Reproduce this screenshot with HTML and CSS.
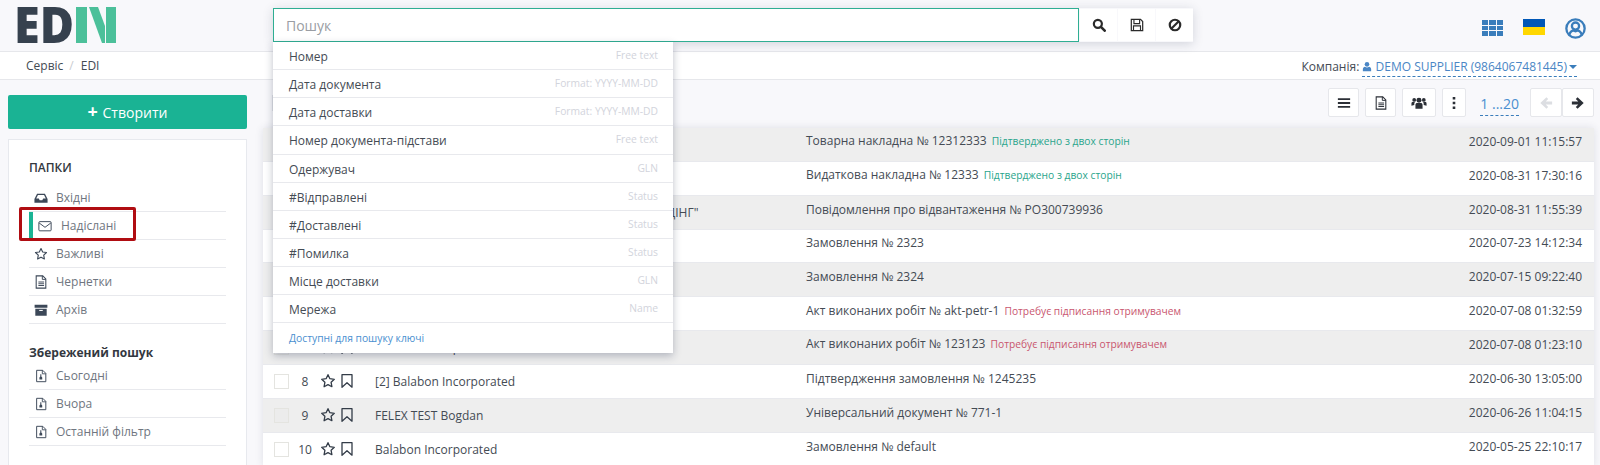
FILE: index.html
```html
<!DOCTYPE html>
<html lang="uk">
<head>
    <meta charset="UTF-8">
    <meta name="viewport" content="width=device-width, initial-scale=1.0">
    <title>EDIN</title>
    <link rel="stylesheet" href="styles.css">
</head>
<body>
    <svg class="icon-sprite" aria-hidden="true">
        <symbol id="i-search" viewBox="0 0 16 16"><circle cx="6.7" cy="6.7" r="4.6" fill="none" stroke="currentColor" stroke-width="2.5"/><path d="M10.2 10.2l4.3 4.3" stroke="currentColor" stroke-width="3" stroke-linecap="round"/></symbol>
        <symbol id="i-save" viewBox="0 0 16 16"><path d="M1.500 1.500h10.500l2.500 2.500v10.500h-13z" fill="none" stroke="currentColor" stroke-width="1.400"/><path d="M4.500 2v4.500h6.500v-4.500M4 14v-5h8v5" fill="none" stroke="currentColor" stroke-width="1.300"/></symbol>
        <symbol id="i-ban" viewBox="0 0 16 16"><circle cx="8" cy="8" r="6" fill="none" stroke="currentColor" stroke-width="2.500"/><path d="M4 12l8-8" stroke="currentColor" stroke-width="2.500"/></symbol>
        <symbol id="i-bars" viewBox="0 0 16 16"><path d="M1 2.500h14v2.200h-14zM1 6.900h14v2.200h-14zM1 11.300h14v2.200h-14z" fill="currentColor"/></symbol>
        <symbol id="i-doc" viewBox="0 0 16 16"><path d="M2.500 1h7.500l3.500 3.500v10.500h-11z" fill="none" stroke="currentColor" stroke-width="1.200"/><path d="M9.500 1v4h4M5 8h6.500M5 10h6.500M5 12h6.500" fill="none" stroke="currentColor" stroke-width="1.100"/></symbol>
        <symbol id="i-users" viewBox="0 0 18 16"><circle cx="9" cy="5" r="2.800" fill="currentColor"/><circle cx="3.600" cy="4.500" r="2.100" fill="currentColor"/><circle cx="14.400" cy="4.500" r="2.100" fill="currentColor"/><path d="M5 14.500v-4.300c0-1.500 1-2.200 2-2.200h4c1 0 2 .7 2 2.200v4.300zM.500 11v-2.500c0-1 .7-1.500 1.500-1.500h2.500c-.6.800-.8 1.500-.8 3.200zM17.500 11v-2.500c0-1-.7-1.500-1.500-1.500h-2.500c.6.800.8 1.500.8 3.200z" fill="currentColor"/></symbol>
        <symbol id="i-dots" viewBox="0 0 16 16"><path d="M6.700 2h2.600v2.600h-2.600zM6.700 6.700h2.600v2.600h-2.600zM6.700 11.400h2.600v2.600h-2.600z" fill="currentColor"/></symbol>
        <symbol id="i-left" viewBox="0 0 16 16"><path d="M8.500 1.500l-7 6.500 7 6.500 2-2-2.800-2.800h7.300v-3.400h-7.300l2.800-2.800z" fill="currentColor"/></symbol>
        <symbol id="i-right" viewBox="0 0 16 16"><path d="M7.500 1.500l7 6.500-7 6.500-2-2 2.800-2.800h-7.300v-3.400h7.300l-2.800-2.800z" fill="currentColor"/></symbol>
        <symbol id="i-inbox" viewBox="0 0 16 16"><path d="M3.500 3h9l3 6v4.500h-15v-4.500zM4.500 4.500l-2 4h3l1 2h3l1-2h3l-2-4z" fill="currentColor" fill-rule="evenodd"/></symbol>
        <symbol id="i-mail" viewBox="0 0 16 16"><rect x="1" y="3" width="14" height="10.500" rx="1" fill="none" stroke="currentColor" stroke-width="1.100"/><path d="M1.300 4.500l6.700 5 6.700-5" fill="none" stroke="currentColor" stroke-width="1.100"/></symbol>
        <symbol id="i-star" viewBox="0 0 16 16"><path d="M8 1.700l1.900 4 4.400.6-3.200 3 .8 4.400-3.900-2.100-3.900 2.100.8-4.400-3.200-3 4.400-.6z" fill="none" stroke="currentColor" stroke-width="1.300" stroke-linejoin="round"/></symbol>
        <symbol id="i-mark" viewBox="0 0 12 14"><path d="M1 .7h10v12.500l-5-4.400-5 4.400z" fill="none" stroke="currentColor" stroke-width="1.300" stroke-linejoin="round"/></symbol>
        <symbol id="i-archive" viewBox="0 0 16 16"><path d="M.7 2h14.600v3.500h-14.600zM1.500 6.500h13v8h-13z" fill="currentColor"/><path d="M6 8.500h4" stroke="#fff" stroke-width="1.200"/></symbol>
        <symbol id="i-file" viewBox="0 0 16 16"><path d="M3 1.500h7l3.500 3.500v9.500h-10.500z" fill="none" stroke="currentColor" stroke-width="1.100"/><path d="M9.500 1.500v4h4" fill="none" stroke="currentColor"/><path d="M7.200 6h1.200v2.500l1 1.200v2.300h-3.200v-2.300l1-1.200z" fill="currentColor"/></symbol>
        <symbol id="i-person" viewBox="0 0 14 14"><circle cx="7" cy="4" r="3.200" fill="currentColor"/><path d="M1.200 13.500v-2.500c0-2.200 1.500-3.500 3-3.500 1.600 1.200 4 1.200 5.600 0 1.500 0 3 1.300 3 3.500v2.500z" fill="currentColor"/></symbol>
        <symbol id="i-account" viewBox="0 0 22 22"><circle cx="11" cy="11" r="9.600" fill="none" stroke="currentColor" stroke-width="2.400"/><circle cx="11" cy="8.500" r="3.800" fill="none" stroke="currentColor" stroke-width="2.400"/><path d="M4.500 18c.5-3.500 3-4.800 4-4.800 1.500.8 3.500.8 5 0 1 0 3.500 1.300 4 4.800" fill="none" stroke="currentColor" stroke-width="2.400"/></symbol>
    </svg>

    <header class="topbar">
        <a class="logo" href="#">
            <svg class="logo-mark" width="98" height="36" viewBox="0 0 98 36">
                <text class="logo-text" x="-4" y="36" textLength="60" lengthAdjust="spacingAndGlyphs">ED</text>
                <rect x="58" y="0" width="11" height="36" fill="#4cc09a"/>
                <polygon points="71,0 80,0 87,19 87,36 84,36" fill="#4cc09a"/>
                <rect x="88" y="0" width="10" height="36" fill="#4cc09a"/>
            </svg>
        </a>
        <div class="search">
            <div class="search-field">
                <input class="search-input" type="text" placeholder="Пошук">
                <div class="search-drop">
                    <div class="drop-row"><span>Номер</span><small>Free text</small></div>
                    <div class="drop-row"><span>Дата документа</span><small>Format: YYYY-MM-DD</small></div>
                    <div class="drop-row"><span>Дата доставки</span><small>Format: YYYY-MM-DD</small></div>
                    <div class="drop-row"><span>Номер документа-підстави</span><small>Free text</small></div>
                    <div class="drop-row"><span>Одержувач</span><small>GLN</small></div>
                    <div class="drop-row"><span>#Відправлені</span><small>Status</small></div>
                    <div class="drop-row"><span>#Доставлені</span><small>Status</small></div>
                    <div class="drop-row"><span>#Помилка</span><small>Status</small></div>
                    <div class="drop-row"><span>Місце доставки</span><small>GLN</small></div>
                    <div class="drop-row"><span>Мережа</span><small>Name</small></div>
                    <a class="drop-foot" href="#">Доступні для пошуку ключі</a>
                </div>
            </div>
            <button class="search-btn"><svg class="ic14"><use href="#i-search"/></svg></button>
            <button class="search-btn"><svg class="ic14"><use href="#i-save"/></svg></button>
            <button class="search-btn"><svg class="ic14"><use href="#i-ban"/></svg></button>
        </div>
        <div class="top-icons">
            <div class="apps">
                <i></i><i></i><i></i><i></i><i></i><i></i><i></i><i></i><i></i>
            </div>
            <div class="flag"></div>
            <svg class="account"><use href="#i-account"/></svg>
        </div>
    </header>

    <div class="crumbs">
        <div class="crumb-list">
            <span>Сервіс</span><span class="crumb-sep">/</span><span>EDI</span>
        </div>
        <div class="company">
            Компанія:
            <a class="company-link" href="#"><svg class="ic10"><use href="#i-person"/></svg> DEMO SUPPLIER (9864067481445)<span class="caret"></span></a>
        </div>
    </div>

    <div class="main">
        <aside class="side">
            <button class="create-btn"><span class="plus">+</span> Створити</button>
            <div class="panel">
                <h4 class="panel-title">ПАПКИ</h4>
                <ul class="folder-list">
                    <li><svg class="ic14"><use href="#i-inbox"/></svg>Вхідні</li>
                    <li class="active"><svg class="ic14"><use href="#i-mail"/></svg>Надіслані<div class="mark-box"></div></li>
                    <li><svg class="ic14"><use href="#i-star"/></svg>Важливі</li>
                    <li><svg class="ic14"><use href="#i-doc"/></svg>Чернетки</li>
                    <li><svg class="ic14"><use href="#i-archive"/></svg>Архів</li>
                </ul>
                <h4 class="panel-title saved">Збережений пошук</h4>
                <ul class="folder-list">
                    <li><svg class="ic14"><use href="#i-file"/></svg>Сьогодні</li>
                    <li><svg class="ic14"><use href="#i-file"/></svg>Вчора</li>
                    <li><svg class="ic14"><use href="#i-file"/></svg>Останній фільтр</li>
                </ul>
            </div>
        </aside>

        <section class="content">
            <div class="toolbar">
                <div class="tool-edge"></div>
                <button class="tool-btn w31"><svg class="ic14"><use href="#i-bars"/></svg></button>
                <button class="tool-btn w31"><svg class="ic14"><use href="#i-doc"/></svg></button>
                <button class="tool-btn w34"><svg class="ic16"><use href="#i-users"/></svg></button>
                <button class="tool-btn w24"><svg class="ic16"><use href="#i-dots"/></svg></button>
                <a class="pager" href="#">1 ...20</a>
                <div class="arrows">
                    <button class="tool-btn w32 off"><svg class="ic14"><use href="#i-left"/></svg></button>
                    <button class="tool-btn w32"><svg class="ic14"><use href="#i-right"/></svg></button>
                </div>
            </div>

            <div class="doc-table">
                <div class="doc-row">
                    <span class="check"></span><span class="num">1</span>
                    <svg class="star"><use href="#i-star"/></svg><svg class="mark"><use href="#i-mark"/></svg>
                    <span class="name">Balabon Incorporated</span>
                    <span class="subject">Товарна накладна № 12312333 <em class="ok">Підтверджено з двох сторін</em></span>
                    <span class="date">2020-09-01 11:15:57</span>
                </div>
                <div class="doc-row">
                    <span class="check"></span><span class="num">2</span>
                    <svg class="star"><use href="#i-star"/></svg><svg class="mark"><use href="#i-mark"/></svg>
                    <span class="name">Balabon Incorporated</span>
                    <span class="subject">Видаткова накладна № 12333 <em class="ok">Підтверджено з двох сторін</em></span>
                    <span class="date">2020-08-31 17:30:16</span>
                </div>
                <div class="doc-row">
                    <span class="check"></span><span class="num">3</span>
                    <svg class="star"><use href="#i-star"/></svg><svg class="mark"><use href="#i-mark"/></svg>
                    <span class="name">ТОВ З ОБМЕЖЕНОЮ ВІДПОВІДАЛЬНІСТЮ "АВ ХОЛДІНГ"</span>
                    <span class="subject">Повідомлення про відвантаження № PO300739936</span>
                    <span class="date">2020-08-31 11:55:39</span>
                </div>
                <div class="doc-row">
                    <span class="check"></span><span class="num">4</span>
                    <svg class="star"><use href="#i-star"/></svg><svg class="mark"><use href="#i-mark"/></svg>
                    <span class="name">Balabon Incorporated</span>
                    <span class="subject">Замовлення № 2323</span>
                    <span class="date">2020-07-23 14:12:34</span>
                </div>
                <div class="doc-row">
                    <span class="check"></span><span class="num">5</span>
                    <svg class="star"><use href="#i-star"/></svg><svg class="mark"><use href="#i-mark"/></svg>
                    <span class="name">Balabon Incorporated</span>
                    <span class="subject">Замовлення № 2324</span>
                    <span class="date">2020-07-15 09:22:40</span>
                </div>
                <div class="doc-row">
                    <span class="check"></span><span class="num">6</span>
                    <svg class="star"><use href="#i-star"/></svg><svg class="mark"><use href="#i-mark"/></svg>
                    <span class="name">Balabon Incorporated</span>
                    <span class="subject">Акт виконаних робіт № akt-petr-1 <em class="warn">Потребує підписання отримувачем</em></span>
                    <span class="date">2020-07-08 01:32:59</span>
                </div>
                <div class="doc-row">
                    <span class="check"></span><span class="num">7</span>
                    <svg class="star"><use href="#i-star"/></svg><svg class="mark"><use href="#i-mark"/></svg>
                    <span class="name">Balabon Incorporated</span>
                    <span class="subject">Акт виконаних робіт № 123123 <em class="warn">Потребує підписання отримувачем</em></span>
                    <span class="date">2020-07-08 01:23:10</span>
                </div>
                <div class="doc-row">
                    <span class="check"></span><span class="num">8</span>
                    <svg class="star"><use href="#i-star"/></svg><svg class="mark"><use href="#i-mark"/></svg>
                    <span class="name">[2] Balabon Incorporated</span>
                    <span class="subject">Підтвердження замовлення № 1245235</span>
                    <span class="date">2020-06-30 13:05:00</span>
                </div>
                <div class="doc-row">
                    <span class="check"></span><span class="num">9</span>
                    <svg class="star"><use href="#i-star"/></svg><svg class="mark"><use href="#i-mark"/></svg>
                    <span class="name">FELEX TEST Bogdan</span>
                    <span class="subject">Універсальний документ № 771-1</span>
                    <span class="date">2020-06-26 11:04:15</span>
                </div>
                <div class="doc-row">
                    <span class="check"></span><span class="num">10</span>
                    <svg class="star"><use href="#i-star"/></svg><svg class="mark"><use href="#i-mark"/></svg>
                    <span class="name">Balabon Incorporated</span>
                    <span class="subject">Замовлення № default</span>
                    <span class="date">2020-05-25 22:10:17</span>
                </div>
            </div>
        </section>
    </div>
</body>
</html>
```

FILE: styles.css
```css
* {
    box-sizing: border-box;
}

html, body {
    height: 465px;
    overflow: hidden;
}

body {
    margin: 0;
    font-family: "Open Sans", sans-serif;
    font-size: 12px;
    line-height: 17px;
    background-color: #f8f8fb;
    color: #444b54;
}

a {
    text-decoration: none;
}

button {
    font-family: inherit;
    cursor: pointer;
}

.icon-sprite {
    display: none;
}

.ic10 { width: 10px; height: 11px; }
.ic14 { width: 14px; height: 14px; }
.ic16 { width: 16px; height: 16px; }

/* top bar */
.topbar {
    display: flex;
    align-items: flex-start;
    height: 52px;
    padding: 8px 14px 0 18px;
    border-bottom: 1px solid #e6e7eb;
}

.logo {
    display: block;
    width: 255px;
    height: 36px;
    margin-top: -1px;
}

.logo-mark {
    overflow: visible;
}

.logo-text {
    font-family: "Open Sans", sans-serif;
    font-weight: 800;
    font-size: 50px;
    fill: #36414e;
}

.search {
    display: flex;
    box-shadow: 0 2px 10px rgba(40, 50, 80, 0.18);
    height: 34px;
}

.search-field {
    position: relative;
    width: 806px;
}

.search-input {
    display: block;
    width: 100%;
    height: 34px;
    padding: 0 12px;
    border: 1px solid #2fae93;
    background: #fff;
    font-family: inherit;
    font-size: 14px;
    color: #444b54;
}

.search-input::placeholder {
    color: #9a9da3;
}

.search-drop {
    position: absolute;
    top: 34px;
    left: 0;
    z-index: 5;
    width: 400px;
    background: #fff;
    box-shadow: 0 3px 8px rgba(40, 50, 80, 0.3);
}

.drop-row {
    display: flex;
    justify-content: space-between;
    height: 28.150px;
    padding: 6px 15px 0 16px;
    border-bottom: 1px solid #e8e9ed;
    color: #444b54;
}

.drop-row small {
    font-size: 10.300px;
    color: #d2d4dc;
    margin-top: -1px;
}

.drop-foot {
    display: block;
    height: 30px;
    padding: 7px 15px 0 16px;
    font-size: 10.300px;
    color: #4a8fd0;
}

.search-btn {
    width: 37px;
    height: 32px;
    margin-top: 1px;
    margin-left: 1px;
    padding: 0;
    border: 0;
    background: #fff;
    color: #2b2b2b;
}

.search-btn svg {
    display: block;
    margin: 0 auto;
}

.top-icons {
    display: flex;
    align-items: center;
    gap: 20px;
    margin-left: auto;
    height: 34px;
    margin-top: 3px;
}

.apps {
    display: grid;
    grid-template-columns: repeat(3, 6.300px);
    grid-auto-rows: 4.500px;
    gap: 1px;
}

.apps i {
    background: #3a7dbb;
}

.flag {
    width: 22px;
    height: 16px;
    margin-top: -2px;
    background: linear-gradient(#0057b7 50%, #ffd700 50%);
}

.account {
    width: 21px;
    height: 21px;
    margin-top: 1px;
    color: #3a7dbb;
}

/* breadcrumb strip */
.crumbs {
    display: flex;
    justify-content: space-between;
    align-items: center;
    height: 28px;
    padding: 0 23px 0 26px;
    background: #fff;
    border-bottom: 1px solid #e6e7eb;
}

.crumb-sep {
    margin: 0 7px 0 6px;
    color: #c9ccd1;
}

.company-link {
    display: inline-block;
    height: 19px;
    margin-top: 3px;
    color: #4a86c5;
    border-bottom: 1px dashed #3a7dbb;
}

.company-link svg {
    vertical-align: -1px;
}

.caret {
    display: inline-block;
    margin-left: 2px;
    vertical-align: 2px;
    border-top: 4px solid #3a7dbb;
    border-left: 4px solid transparent;
    border-right: 4px solid transparent;
}

/* page body */
.main {
    display: flex;
    padding: 8px 6px 0 8px;
}

.side {
    width: 239px;
    padding-top: 7px;
    flex-shrink: 0;
}

.create-btn {
    display: block;
    width: 100%;
    height: 34px;
    border: 0;
    border-radius: 2px;
    background: #1ab394;
    color: #fff;
    font-size: 14px;
}

.plus {
    margin-right: 1px;
    font-size: 18px;
    font-weight: 700;
    line-height: 14px;
}

.panel {
    height: 340px;
    margin-top: 10px;
    padding: 19px 20px 0;
    background: #fff;
    border: 1px solid #e7e9ee;
}

.panel-title {
    margin: 0 0 8px;
    font-size: 12px;
    line-height: 17px;
    font-weight: 600;
    color: #33383f;
}

.panel-title.saved {
    margin: 20px 0 1px;
    font-weight: 700;
}

.folder-list {
    margin: 0;
    padding: 0;
    list-style: none;
}

.folder-list li {
    position: relative;
    display: flex;
    align-items: center;
    gap: 8px;
    height: 28px;
    padding-left: 5px;
    border-bottom: 1px solid #e8e9ed;
    color: #6f7680;
}

.folder-list svg {
    color: #3c4858;
}

.folder-list li.active {
    gap: 9px;
    border-left: 4px solid #1ab394;
}

.mark-box {
    position: absolute;
    top: -5px;
    left: -14px;
    width: 117px;
    height: 34px;
    border: 3px solid #b00d12;
    border-radius: 2px;
}

.content {
    flex: 1;
    margin-left: 16px;
}

.toolbar {
    display: flex;
    align-items: flex-start;
    justify-content: flex-end;
    height: 29px;
    margin-bottom: 11px;
}

.tool-edge {
    width: 2px;
    height: 16px;
    margin: 7px auto 0 9px;
    background: #dfe1e6;
}

.tool-btn {
    height: 29px;
    margin-left: 6px;
    padding: 0;
    border: 1px solid #e6e7eb;
    border-radius: 2px;
    background: #fff;
    color: #2b2f36;
}

.tool-btn svg {
    display: block;
    margin: 0 auto;
}

.w24 { width: 24px; }
.w31 { width: 31px; }
.w32 { width: 32px; margin-left: 0; }
.w34 { width: 34px; }

.tool-btn.off {
    color: #dcdee2;
}

.pager {
    height: 26px;
    margin: 2px 11px 0 14px;
    font-size: 14px;
    line-height: 27px;
    color: #4a8fd0;
    border-bottom: 1px dashed #3a7dbb;
}

.arrows {
    display: flex;
}

/* document table */
.doc-table {
    background: #fff;
    box-shadow: 0 0 8px rgba(40, 50, 80, 0.12);
}

.doc-row {
    display: flex;
    align-items: center;
    height: 33.850px;
    padding: 0 12px 0 10.500px;
    border-bottom: 1px solid #e8e9ed;
}

.doc-row:nth-child(odd) {
    background: #eeeeee;
}

.check {
    width: 15px;
    height: 15px;
    flex-shrink: 0;
    background: #fff;
    border: 1px solid #e4e4e0;
}

.doc-row:nth-child(odd) .check {
    background: #ececec;
}

.num {
    width: 30px;
    margin-left: 1.500px;
    text-align: center;
}

.star {
    width: 16px;
    height: 16px;
    color: #333c48;
}

.mark {
    width: 12px;
    height: 14px;
    margin-left: 5px;
    color: #333c48;
}

.name {
    width: 431px;
    margin-left: 22px;
    white-space: nowrap;
    overflow: hidden;
}

.subject {
    flex: 1;
    padding-bottom: 6px;
}

.date {
    padding-bottom: 6px;
}

.subject em {
    margin-left: 2px;
    font-style: normal;
    font-size: 10.250px;
}

.ok {
    color: #2aa58c;
}

.warn {
    color: #c9566f;
}
```
